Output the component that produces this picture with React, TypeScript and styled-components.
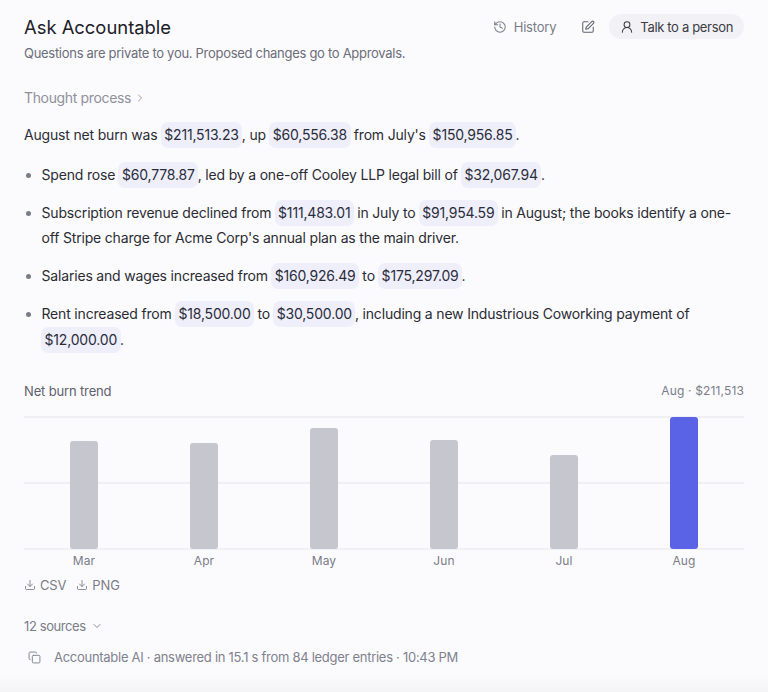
import React from "react";
import styled, { createGlobalStyle } from "styled-components";
import { History, SquarePen, UserRound, ChevronRight, ChevronDown, Download, Copy } from "lucide-react";

const Global = createGlobalStyle`
  html, body { margin: 0; padding: 0; background: #fbfbfe; }
  body { font-family: Inter, "Liberation Sans", sans-serif; color: #2b2c33; }
  #root { width: 768px; height: 692px; overflow: hidden; }
`;

const Page = styled.main`
  position: relative;
  width: 768px;
  height: 692px;
  box-sizing: border-box;
  padding: 13px 24px 0;
  overflow: hidden;
`;

const Header = styled.header`
  display: flex;
  justify-content: space-between;
  align-items: flex-start;
`;

const Heading = styled.div`
  display: flex;
  flex-direction: column;
`;

const Title = styled.h1`
  margin: 0;
  font-size: 18.4px;
  line-height: 28px;
  font-weight: 400;
  color: #202127;
`;

const Subtitle = styled.p`
  margin: 2px 0 0;
  font-size: 13px;
  line-height: 20px;
  letter-spacing: -0.29px;
  color: #6b6d78;
`;

const Actions = styled.div`
  display: flex;
  align-items: center;
  margin-top: 1px;
`;

const GhostButton = styled.button`
  display: flex;
  align-items: center;
  gap: 7px;
  border: 0;
  background: none;
  padding: 0;
  font: inherit;
  font-size: 13px;
  line-height: 24px;
  letter-spacing: -0.2px;
  color: #7a7c87;
`;

const IconButton = styled(GhostButton)`
  margin-left: 25px;
  color: #5f616c;
`;

const PersonButton = styled(GhostButton)`
  margin-left: 14px;
  gap: 6px;
  height: 25px;
  padding: 0 11px;
  border-radius: 13px;
  background: #f2f2f6;
  color: #3a3b43;
  letter-spacing: -0.33px;
`;

const Thought = styled.div`
  display: flex;
  align-items: center;
  gap: 3px;
  margin-top: 25px;
  font-size: 14px;
  line-height: 20px;
  letter-spacing: -0.35px;
  color: #8f919b;
`;

const Paragraph = styled.p`
  margin: 14px 0 0;
  font-size: 14px;
  line-height: 24px;
  letter-spacing: -0.18px;
`;

const Chip = styled.span`
  display: inline-block;
  margin: 0 -0.5px;
  padding: 0 3.5px;
  border-radius: 7px;
  background: #eeeffb;
  line-height: 26px;
  color: #2b2c3a;
`;

const List = styled.ul`
  margin: 14px 0 0;
  padding: 0 0 0 17.5px;
  font-size: 14px;
  line-height: 24px;
  letter-spacing: -0.18px;
`;

const Item = styled.li`
  margin-bottom: 12.4px;
  &::marker { color: #7a7c87; }
`;

const ChartHead = styled.div`
  display: flex;
  justify-content: space-between;
  align-items: center;
  margin-top: 29px;
  line-height: 18px;
`;

const ChartTitle = styled.span`
  font-size: 13px;
  letter-spacing: -0.15px;
  color: #5f616c;
`;

const ChartValue = styled.span`
  font-size: 12px;
  letter-spacing: 0.15px;
  color: #7a7c87;
`;

const Plot = styled.svg`
  display: block;
  margin-top: 16px;
`;

const Months = styled.div`
  display: grid;
  grid-template-columns: repeat(6, 120px);
  margin-top: 2px;
`;

const Month = styled.span`
  text-align: center;
  font-size: 12px;
  line-height: 18px;
  letter-spacing: 0.1px;
  color: #7a7c87;
`;

const Exports = styled.div`
  display: flex;
  gap: 10px;
  margin-top: 5px;
`;

const ExportLink = styled.span`
  display: flex;
  align-items: center;
  gap: 4px;
  font-size: 13px;
  line-height: 20px;
  letter-spacing: -0.15px;
  color: #7a7c87;
`;

const Sources = styled.div`
  display: flex;
  align-items: center;
  gap: 5px;
  margin-top: 21px;
  font-size: 13px;
  line-height: 20px;
  letter-spacing: -0.4px;
  color: #7a7c87;
`;

const Meta = styled.div`
  display: flex;
  align-items: center;
  gap: 13px;
  margin: 11px 0 0 4px;
  font-size: 13px;
  line-height: 20px;
  letter-spacing: -0.28px;
  color: #7f818c;
`;

const BottomFade = styled.div`
  position: absolute;
  left: 0;
  right: 0;
  bottom: 0;
  height: 18px;
  background: linear-gradient(to bottom, rgba(244,244,247,0), #f4f4f7);
`;

const bars = [
  { month: "Mar", top: 24 },
  { month: "Apr", top: 26 },
  { month: "May", top: 11 },
  { month: "Jun", top: 23 },
  { month: "Jul", top: 38 },
  { month: "Aug", top: 0 },
];

export default function App() {
  return (
    <Page>
      <Global />
      <Header>
        <Heading>
          <Title>Ask Accountable</Title>
          <Subtitle>Questions are private to you. Proposed changes go to Approvals.</Subtitle>
        </Heading>
        <Actions>
          <GhostButton><History size={14} strokeWidth={1.75} />History</GhostButton>
          <IconButton aria-label="New"><SquarePen size={14} strokeWidth={1.75} /></IconButton>
          <PersonButton><UserRound size={14} strokeWidth={1.75} />Talk to a person</PersonButton>
        </Actions>
      </Header>

      <Thought>Thought process <ChevronRight size={12} strokeWidth={1.75} /></Thought>

      <Paragraph>
        August net burn was <Chip>$211,513.23</Chip>, up <Chip>$60,556.38</Chip> from July's <Chip>$150,956.85</Chip>.
      </Paragraph>

      <List>
        <Item>Spend rose <Chip>$60,778.87</Chip>, led by a one-off Cooley LLP legal bill of <Chip>$32,067.94</Chip>.</Item>
        <Item>Subscription revenue declined from <Chip>$111,483.01</Chip> in July to <Chip>$91,954.59</Chip> in August; the books identify a one-off Stripe charge for Acme Corp's annual plan as the main driver.</Item>
        <Item>Salaries and wages increased from <Chip>$160,926.49</Chip> to <Chip>$175,297.09</Chip>.</Item>
        <Item>Rent increased from <Chip>$18,500.00</Chip> to <Chip>$30,500.00</Chip>, including a new Industrious Coworking payment of <Chip>$12,000.00</Chip>.</Item>
      </List>

      <ChartHead>
        <ChartTitle>Net burn trend</ChartTitle>
        <ChartValue>Aug · $211,513</ChartValue>
      </ChartHead>

      <Plot width="720" height="134" viewBox="0 0 720 134">
        {[1, 67, 133].map((y) => (
          <line key={y} x1="0" x2="720" y1={y} y2={y} stroke="#f0f0f4" strokeWidth="2" />
        ))}
        {bars.map((b, i) => (
          <rect
            key={b.month}
            x={46 + i * 120}
            y={b.top + 1}
            width="28"
            height={132 - b.top}
            rx="3"
            fill={b.month === "Aug" ? "#5a63e6" : "#c5c6ce"}
          />
        ))}
      </Plot>

      <Months>
        {bars.map((b) => <Month key={b.month}>{b.month}</Month>)}
      </Months>

      <Exports>
        <ExportLink><Download size={12} strokeWidth={1.75} />CSV</ExportLink>
        <ExportLink><Download size={12} strokeWidth={1.75} />PNG</ExportLink>
      </Exports>

      <Sources>12 sources <ChevronDown size={12} strokeWidth={1.75} /></Sources>

      <Meta><Copy size={13} strokeWidth={1.75} />Accountable AI · answered in 15.1 s from 84 ledger entries · 10:43 PM</Meta>

      <BottomFade />
    </Page>
  );
}
